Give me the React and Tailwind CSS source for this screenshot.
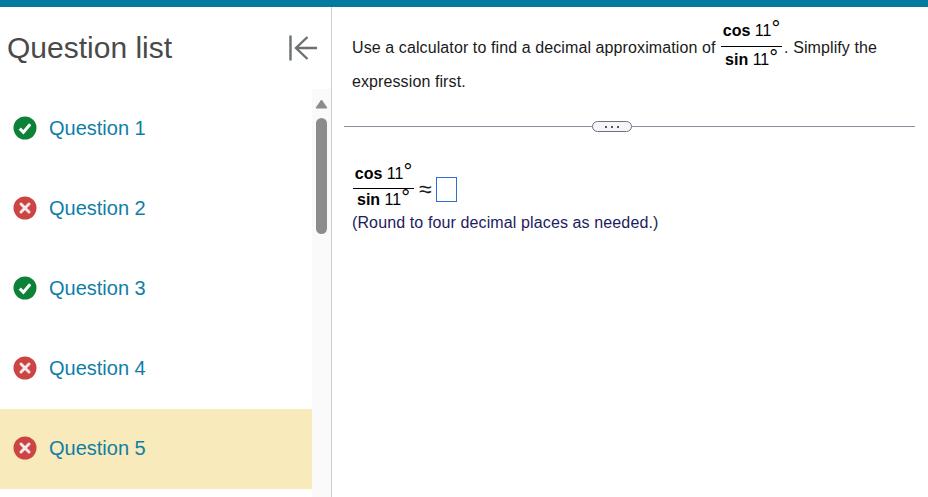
import React from "react";

const questions = [
  { label: "Question 1", ok: true },
  { label: "Question 2", ok: false },
  { label: "Question 3", ok: true },
  { label: "Question 4", ok: false },
  { label: "Question 5", ok: false, active: true },
];

const StatusIcon = ({ ok }) => (
  <svg width="24" height="24" viewBox="0 0 24 24" className="shrink-0">
    <circle cx="12" cy="12" r="11.5" fill={ok ? "#0b8238" : "#cc4444"} />
    {ok ? (
      <path d="M6.8 12.6l3.6 3.6 6.8-8" fill="none" stroke="#fff" strokeWidth="3" />
    ) : (
      <path d="M8 8l8 8M16 8l-8 8" fill="none" stroke="#fff" strokeWidth="3" strokeLinecap="round" opacity="0.88" />
    )}
  </svg>
);

const Degree = () => <sup className="top-0 text-[22px] leading-[18px]">°</sup>;

const Fraction = ({ className, barGap, lowerGap = "" }) => (
  <span className={`inline-flex flex-col text-[16px] tracking-normal text-black ${className}`}>
    <span className={`flex items-baseline justify-center whitespace-nowrap border-b border-black leading-[18px] ${barGap}`}>
      <b>cos</b>&nbsp;11<Degree />
    </span>
    <span className={`flex items-baseline justify-center whitespace-nowrap leading-[18px] ${lowerGap}`}>
      <b>sin</b>&nbsp;11<Degree />
    </span>
  </span>
);

const App = () => {
  return (
    <div className="flex h-[497px] w-[928px] flex-col overflow-hidden bg-white font-['Liberation_Sans',Arial,sans-serif]">
      <div className="h-[7px] shrink-0 bg-[#007a9e]" />
      <div className="flex min-h-0 flex-1">
        <aside className="flex w-[332px] shrink-0 flex-col border-r border-[#c9cdd4]">
          <div className="flex h-[82px] shrink-0 items-center justify-between pr-[13px] pl-[7px]">
            <h1 className="pb-[1px] text-[30px] leading-none text-[#4a4a4a]">Question list</h1>
            <svg width="30" height="30" viewBox="0 0 30 30" fill="none" stroke="#6b7072" strokeWidth="2.4">
              <path d="M2.5 2.5v25M29 15H8M19.5 4L8 15l11.5 11" />
            </svg>
          </div>
          <div className="flex min-h-0 flex-1">
            <ul className="w-[312px]">
              {questions.map((q) => (
                <li key={q.label} className={`flex h-[80px] items-center gap-[12px] pb-[2px] pl-[13px] ${q.active ? "bg-[#f8eabb]" : ""}`}>
                  <StatusIcon ok={q.ok} />
                  <span className="text-[20px] text-[#0f7ea6]">{q.label}</span>
                </li>
              ))}
            </ul>
            <div className="flex w-[19px] flex-col items-center bg-[#fafafa] pt-[10px]">
              <svg width="13" height="10" viewBox="0 0 13 10">
                <path d="M6.5 1L12 9H1Z" fill="#8c8c8c" stroke="#8c8c8c" strokeLinejoin="round" />
              </svg>
              <div className="mt-[9px] h-[116px] w-[11px] rounded-full bg-[#8c8c8c]" />
            </div>
          </div>
        </aside>
        <main className="min-w-0 flex-1 pr-[13px] pl-[12px] text-[16px] text-[#1a1a1a]">
          <div className="h-[108px] pl-[8px] tracking-[0.1px]">
            <div className="flex h-[62px] items-center whitespace-nowrap pt-[20px]">
              <span>Use a calculator to find a decimal approximation of&nbsp;</span>
              <Fraction className="mb-[7px] ml-[1px] w-[61px]" barGap="pb-[6px]" lowerGap="pt-[2px]" />
              <span className="ml-[2px]">.&nbsp;Simplify the</span>
            </div>
            <div className="leading-[26px]">expression first.</div>
          </div>
          <div className="mt-[6px] flex h-[11px] items-center">
            <div className="h-px w-[248px] bg-[#8a8f9e]" />
            <div className="flex h-[11px] w-[40px] items-center justify-center gap-[4px] rounded-full border border-[#6e7280] bg-[#f6f6f8]">
              <span className="h-[2px] w-[2px] bg-[#555]" />
              <span className="h-[2px] w-[2px] bg-[#555]" />
              <span className="h-[2px] w-[2px] bg-[#555]" />
            </div>
            <div className="h-px flex-1 bg-[#8a8f9e]" />
          </div>
          <div className="mt-[31px] pl-[8px]">
            <div className="flex items-center">
              <Fraction className="ml-[1px] w-[61px]" barGap="pb-[5px]" />
              <span className="mt-[6px] ml-[5px] text-[23px] leading-none">≈</span>
              <span className="mt-[6px] ml-[4px] h-[25px] w-[21px] border border-[#2d6fd6]" />
            </div>
            <p className="mt-[4px] leading-[20px] tracking-[0.12px] text-[#1c1c5e]">(Round to four decimal places as needed.)</p>
          </div>
        </main>
      </div>
    </div>
  );
};

export default App;
